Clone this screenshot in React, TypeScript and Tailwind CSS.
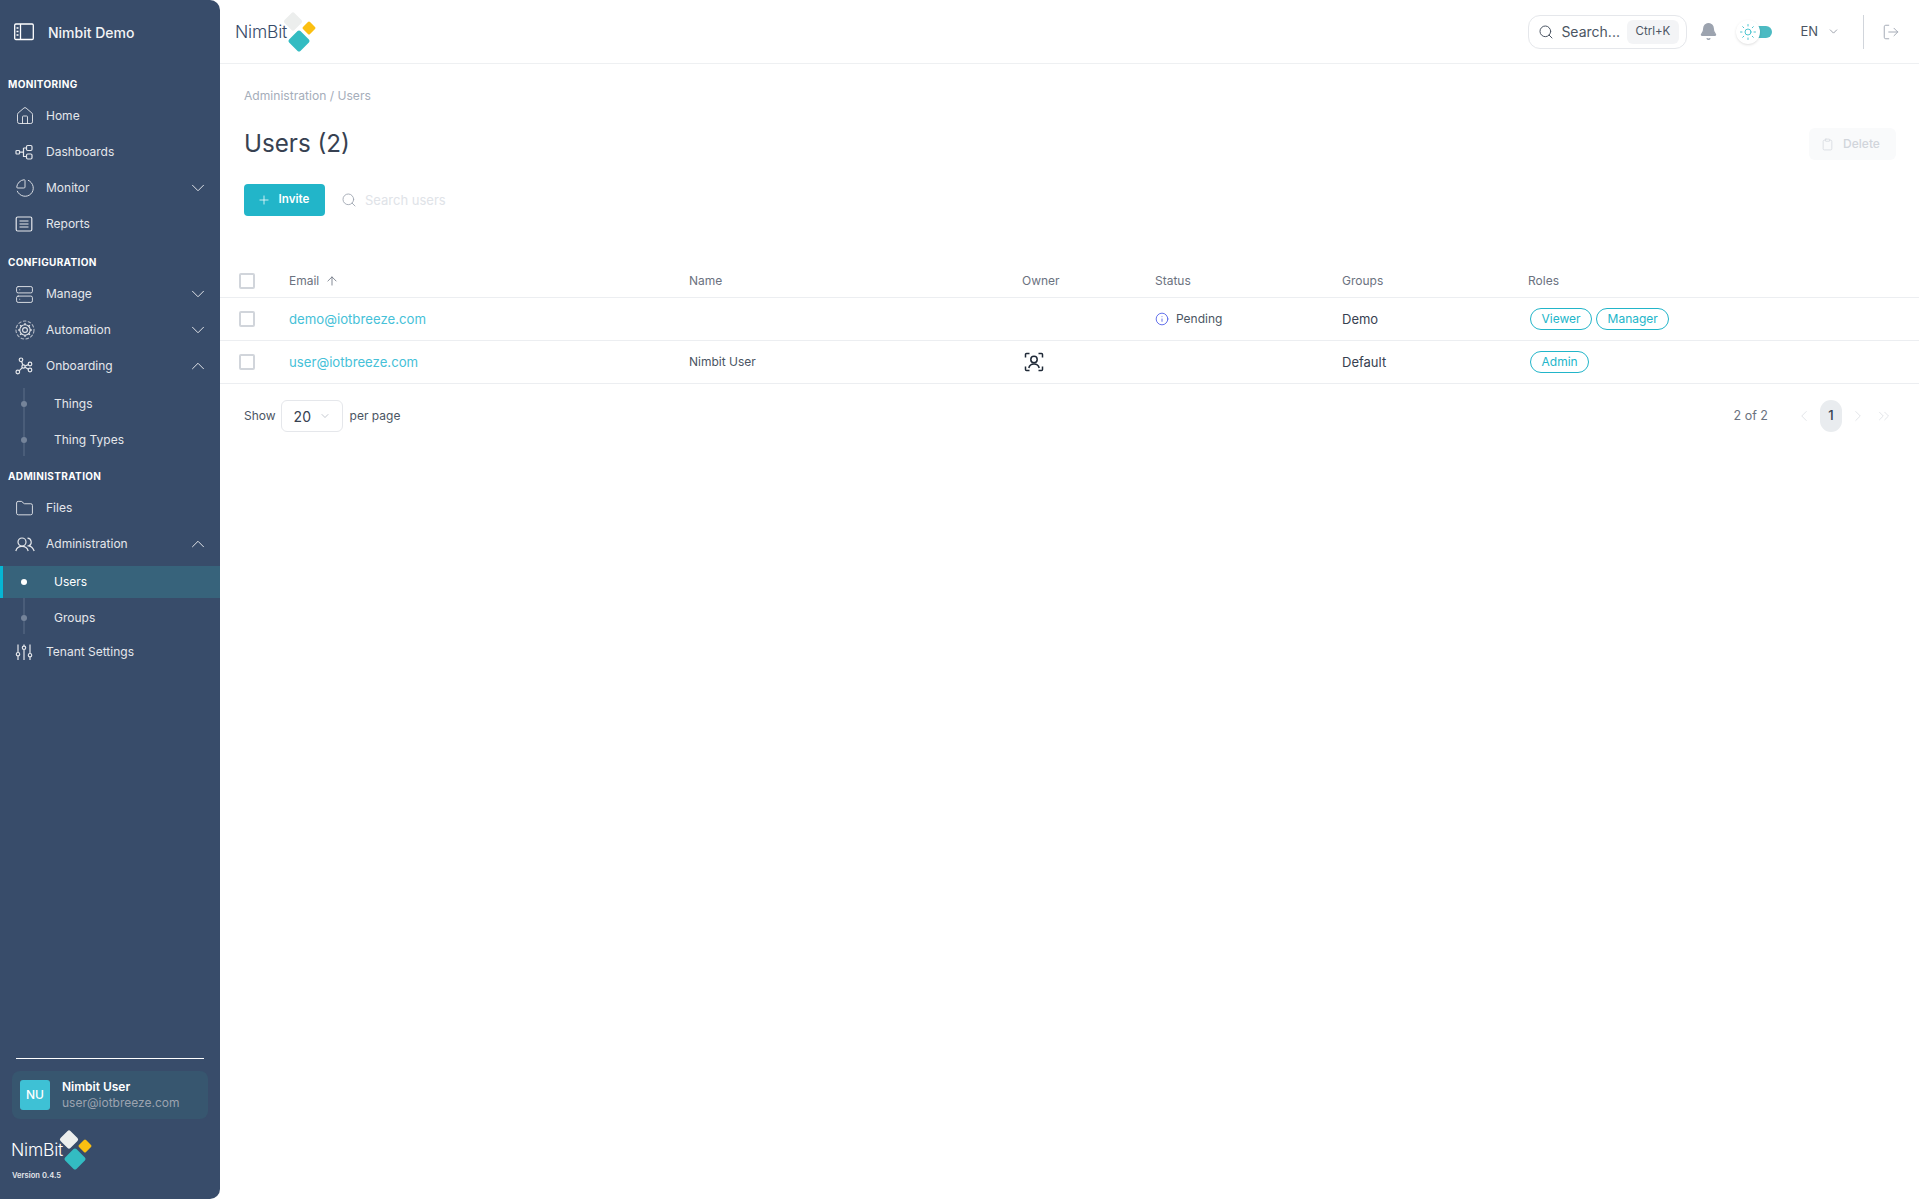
import {
  ArrowUp,
  ChevronDown,
  ChevronLeft,
  ChevronRight,
  ChevronUp,
  ChevronsRight,
  ChartPie,
  Folder,
  House,
  Info,
  Plus,
  Search,
  Server,
  Sun,
  Bell,
  Clipboard,
  LogOut,
} from "lucide-react";
import type { ReactNode } from "react";

function SidebarToggleIcon() {
  return (
    <svg width="20" height="18" viewBox="0 0 20 18" fill="none" stroke="currentColor" strokeWidth="1.3">
      <rect x="0.7" y="1" width="18.6" height="15.5" rx="1.2" />
      <path d="M6.5 1v15.500M2.500 5h2M2.500 8.500h2M2.500 12h2" />
    </svg>
  );
}

function DashboardsIcon() {
  return (
    <svg width="18" height="18" viewBox="0 0 18 18" fill="none" stroke="currentColor" strokeWidth="1.2">
      <rect x="1" y="7.500" width="3.500" height="3.500" rx="0.8" />
      <path d="M4.500 9.200h4M8.500 5v8.500h3M8.500 5h3" />
      <rect x="11.500" y="2.500" width="5.500" height="5" rx="1.200" />
      <rect x="11.500" y="11" width="5.500" height="5" rx="1.200" />
    </svg>
  );
}

function ReportsIcon() {
  return (
    <svg width="18" height="18" viewBox="0 0 18 18" fill="none" stroke="currentColor" strokeWidth="1.2">
      <rect x="1.200" y="2" width="15.600" height="14" rx="1.500" />
      <path d="M4.500 6h9M4.500 9h9M4.500 12h9" />
    </svg>
  );
}

function AutomationIcon() {
  return (
    <svg width="20" height="20" viewBox="0 0 20 20" fill="none" stroke="currentColor" strokeWidth="1.1">
      <circle cx="10" cy="10" r="9" strokeDasharray="3.500 1.500" opacity="0.7" />
      <circle cx="10" cy="10" r="5.200" />
      <circle cx="10" cy="10" r="2.400" />
      <path d="M10 3.200v1.600M10 15.200v1.600M3.200 10h1.600M15.200 10h1.600M5.200 5.200l1.100 1.100M13.700 13.700l1.100 1.100M14.800 5.200l-1.100 1.100M6.300 13.700l-1.100 1.100" strokeWidth="1.600" />
    </svg>
  );
}

function OnboardingIcon() {
  return (
    <svg width="18" height="18" viewBox="0 0 18 18" fill="none" stroke="currentColor" strokeWidth="1.2">
      <circle cx="6" cy="2.800" r="1.800" />
      <circle cx="15" cy="7" r="1.800" />
      <circle cx="15" cy="13" r="1.800" />
      <circle cx="2.800" cy="15" r="1.800" />
      <circle cx="8.500" cy="9.500" r="1.600" />
      <path d="M6.600 4.500l1.300 3.500M10 9l3.400-1.400M10 10.300l3.400 2M7.300 10.700l-3.200 3.200" />
    </svg>
  );
}

function PeopleIcon() {
  return (
    <svg width="20" height="15" viewBox="0 0 20 15" fill="none" stroke="currentColor" strokeWidth="1.2">
      <circle cx="7" cy="5" r="4" />
      <path d="M0.800 14c.8-2.800 3-4.600 6.200-4.600s5.400 1.800 6.200 4.600" />
      <path d="M12.500 1.100a4 4 0 0 1 1.200 7.700c2.600.4 4.500 2.400 5.500 5.200" />
    </svg>
  );
}

function SlidersIcon() {
  return (
    <svg width="18" height="18" viewBox="0 0 18 18" fill="none" stroke="currentColor" strokeWidth="1.2">
      <path d="M3 1.500v8M3 13v4M9 1.500v1.500M9 6.500v10.500M15 1.500v9M15 14v3" />
      <circle cx="3" cy="11.200" r="1.700" />
      <circle cx="9" cy="4.800" r="1.700" />
      <circle cx="15" cy="12.200" r="1.700" />
    </svg>
  );
}

function OwnerIcon() {
  return (
    <svg width="20" height="20" viewBox="0 0 20 20" fill="none" stroke="#1f2937" strokeWidth="1.500">
      <path d="M1.500 5.500V2.500a1 1 0 0 1 1-1h3M14.500 1.500h3a1 1 0 0 1 1 1v3M18.500 14.500v3a1 1 0 0 1-1 1h-3M5.500 18.500h-3a1 1 0 0 1-1-1v-3" />
      <circle cx="10" cy="7.500" r="3.200" />
      <path d="M4.800 16c.6-2.600 2.500-4 5.200-4s4.600 1.400 5.200 4" />
    </svg>
  );
}

function Logo({ light }: { light?: boolean }) {
  return (
    <div className="flex items-center">
      <span
        className={`text-[17.5px] font-light leading-none tracking-[-0.2px] ${light ? "text-white" : "text-[#374b69]"}`}
      >
        NimBit
      </span>
      <svg width="40" height="42" viewBox="0 0 40 42" className="-ml-[5px]">
        <rect x="4" y="3.500" width="14" height="14" rx="2" transform="rotate(45 11 10.500)" fill="#eceeed" />
        <rect x="22" y="12" width="10" height="10" rx="1.500" transform="rotate(45 27 17)" fill="#fbbf11" />
        <rect x="9" y="22" width="16" height="16" rx="2" transform="rotate(45 17 30)" fill="#33bcc2" />
      </svg>
    </div>
  );
}

function SectionLabel({ children, className }: { children: ReactNode; className: string }) {
  return (
    <div className={`pl-2 text-[10px] font-bold leading-4 tracking-[0.35px] text-white uppercase ${className}`}>
      {children}
    </div>
  );
}

function NavRow({ icon, label, open }: { icon: ReactNode; label: string; open?: "up" | "down" }) {
  return (
    <div className="flex h-9 items-center text-[12px] text-[#e5e7eb]">
      <span className="flex w-[46px] shrink-0 items-center pl-[15px] text-[#e5e7eb]">{icon}</span>
      <span>{label}</span>
      {open === "down" && <ChevronDown size={22} strokeWidth={1.05} className="mr-[11px] ml-auto" />}
      {open === "up" && <ChevronUp size={22} strokeWidth={1.05} className="mr-[11px] ml-auto" />}
    </div>
  );
}

function SubRow({ label, active }: { label: string; active?: boolean }) {
  return (
    <div className="relative flex h-9 items-center pl-[54px] text-[12px] text-[#e5e7eb]">
      {active && <div className="absolute inset-x-0 top-[2px] bottom-[2px] border-l-[3px] border-[#06b6d4] bg-[#37637b]" />}
      <span className={`absolute left-[21px] size-[6px] rounded-full ${active ? "bg-white" : "bg-[#75849a]"}`} />
      <span className={`relative ${active ? "text-white" : ""}`}>{label}</span>
    </div>
  );
}

function SubGroup({ children }: { children: ReactNode }) {
  return (
    <div className="relative">
      <div className="absolute top-[2px] bottom-[2px] left-[23px] w-[2px] bg-[#4a5d79]" />
      {children}
    </div>
  );
}

function Sidebar() {
  return (
    <aside className="flex h-full w-[220px] shrink-0 flex-col rounded-r-[10px] bg-[#384c6a]">
      <div className="flex h-16 items-center gap-[14px] pl-[14px] text-white">
        <SidebarToggleIcon />
        <span className="text-[14px] font-medium text-[#f3f4f6]">Nimbit Demo</span>
      </div>
      <SectionLabel className="pt-3 pb-[6px]">Monitoring</SectionLabel>
      <NavRow icon={<House size={20} strokeWidth={1.1} />} label="Home" />
      <NavRow icon={<DashboardsIcon />} label="Dashboards" />
      <NavRow icon={<ChartPie size={20} strokeWidth={1.1} className="-scale-x-100" />} label="Monitor" open="down" />
      <NavRow icon={<ReportsIcon />} label="Reports" />
      <SectionLabel className="pt-3 pb-[6px]">Configuration</SectionLabel>
      <NavRow icon={<Server size={19} strokeWidth={1.15} />} label="Manage" open="down" />
      <NavRow icon={<AutomationIcon />} label="Automation" open="down" />
      <NavRow icon={<OnboardingIcon />} label="Onboarding" open="up" />
      <div className="mt-[2px]">
        <SubGroup>
          <SubRow label="Things" />
          <SubRow label="Thing Types" />
        </SubGroup>
      </div>
      <SectionLabel className="pt-[10px] pb-[6px]">Administration</SectionLabel>
      <NavRow icon={<Folder size={19} strokeWidth={1.15} />} label="Files" />
      <NavRow icon={<PeopleIcon />} label="Administration" open="up" />
      <div className="mt-[2px]">
        <SubGroup>
          <SubRow label="Users" active />
          <SubRow label="Groups" />
        </SubGroup>
      </div>
      <div className="-mt-[2px]">
        <NavRow icon={<SlidersIcon />} label="Tenant Settings" />
      </div>

      <div className="mt-auto px-3 pb-[17px]">
        <div className="mx-1 border-t border-white" />
        <div className="mt-3 flex h-12 items-center gap-[12px] rounded-lg bg-[#37566f] pl-2">
          <div className="flex size-[30px] items-center justify-center rounded-[3px] bg-[#3ec1d5] text-[12px] font-medium text-white">
            NU
          </div>
          <div className="leading-[16px]">
            <div className="text-[12px] font-semibold text-white">Nimbit User</div>
            <div className="text-[12px] text-[#9ca3af]">user@iotbreeze.com</div>
          </div>
        </div>
        <div className="mt-[10px] -mb-[1px] -ml-[1px] h-[42px]">
          <Logo light />
        </div>
        <div className="text-[7.6px] leading-3 font-semibold text-[#e5e7eb]">Version 0.4.5</div>
      </div>
    </aside>
  );
}

function TopBar() {
  return (
    <header className="flex h-16 shrink-0 items-center justify-between border-b border-[#eef0f2] pr-[19px] pl-[15px]">
      <Logo />
      <div className="flex items-center">
        <div className="flex h-[34px] w-[159px] items-center rounded-xl border border-[#e5e7eb] pl-[9px]">
          <Search size={16} strokeWidth={1.5} className="text-[#4b5563]" />
          <span className="ml-[7px] text-[14px] text-[#4b5563]">Search...</span>
          <span className="ml-[7px] flex h-6 w-[52px] items-center justify-center rounded-md bg-[#f3f4f6] text-[11.5px] text-[#4b5563]">
            Ctrl+K
          </span>
        </div>
        <Bell size={19} fill="#9ca3af" strokeWidth={1.5} className="ml-[12px] text-[#9ca3af]" />
        <div className="relative ml-[18px] h-[24px] w-[36px]">
          <div className="absolute top-[6px] right-0 h-3 w-[24px] rounded-full bg-[#4cbac2]" />
          <div className="absolute top-0 left-0 flex size-[24px] items-center justify-center rounded-full bg-white shadow">
            <Sun size={18} strokeWidth={1.2} className="text-[#38bdc9]" />
          </div>
        </div>
        <span className="ml-[28px] pt-px text-[13px] text-[#4b5563]">EN</span>
        <ChevronDown size={13} strokeWidth={1.2} className="ml-[9px] text-[#6b7280]" />
        <div className="ml-[23px] h-[34px] w-px bg-[#d1d5db]" />
        <LogOut size={18} strokeWidth={1.2} className="ml-[18px] text-[#9ca3af]" />
      </div>
    </header>
  );
}

function Checkbox() {
  return <div className="size-[16px] rounded-[2px] border-2 border-[#d1d5db] bg-white" />;
}

function Pill({ children }: { children: ReactNode }) {
  return (
    <span className="flex h-[22px] items-center rounded-full border border-[#22b5c9] px-[10.500px] text-[12px] text-[#22b5c9]">
      {children}
    </span>
  );
}

const rowGrid = "grid grid-cols-[50px_400px_333px_133px_187px_186px_1fr] items-center border-b border-[#eceef1] pl-[19px]";

function UsersTable() {
  return (
    <div className="mt-[47px] text-[#4b5563]">
      <div className={`${rowGrid} h-[35px] pt-[2px] text-[12px] text-[#6b7280]`}>
        <Checkbox />
        <div className="flex items-center gap-[6px]">
          Email <ArrowUp size={14} strokeWidth={1.4} className="text-[#6b7280]" />
        </div>
        <div>Name</div>
        <div>Owner</div>
        <div>Status</div>
        <div>Groups</div>
        <div>Roles</div>
      </div>
      <div className={`${rowGrid} h-[43px] text-[13px]`}>
        <Checkbox />
        <div className="pt-[2px] text-[13.2px] text-[#46c1d8]">demo@iotbreeze.com</div>
        <div />
        <div />
        <div className="flex items-center gap-[7px] text-[12px]">
          <Info size={14} strokeWidth={1.5} className="text-[#4f5fe8]" />
          Pending
        </div>
        <div className="pt-[2px] text-[#374151]">Demo</div>
        <div className="ml-[2px] flex gap-[4px]">
          <Pill>Viewer</Pill>
          <Pill>Manager</Pill>
        </div>
      </div>
      <div className={`${rowGrid} h-[43px] text-[13px]`}>
        <Checkbox />
        <div className="pt-[2px] text-[13.2px] text-[#46c1d8]">user@iotbreeze.com</div>
        <div className="text-[12px]">Nimbit User</div>
        <div className="pl-[2px]">
          <OwnerIcon />
        </div>
        <div />
        <div className="pt-[2px] text-[#374151]">Default</div>
        <div className="ml-[2px] flex">
          <Pill>Admin</Pill>
        </div>
      </div>
    </div>
  );
}

function Pagination() {
  return (
    <div className="flex items-center justify-between pt-4 pr-[26px] pl-[24px]">
      <div className="flex items-center text-[12px] text-[#4b5563]">
        Show
        <div className="mr-[7px] ml-[5px] flex h-8 w-[62px] items-center rounded-md border border-[#e5e7eb] pl-[12px] text-[14px] text-[#374151]">
          20
          <ChevronDown size={12} strokeWidth={1.2} className="ml-[8px] text-[#9ca3af]" />
        </div>
        per page
      </div>
      <div className="flex items-center">
        <span className="mr-[27px] text-[12.5px] text-[#6b7280]">2 of 2</span>
        <ChevronLeft size={18} strokeWidth={1.2} className="text-[#dfe2e7]" />
        <span className="mx-[7px] flex h-8 w-[22px] items-center justify-center rounded-full bg-[#e9ecef] text-[13px] font-medium text-[#374151]">
          1
        </span>
        <ChevronRight size={18} strokeWidth={1.2} className="text-[#dfe2e7]" />
        <ChevronsRight size={18} strokeWidth={1.2} className="ml-[8px] text-[#dfe2e7]" />
      </div>
    </div>
  );
}

export default function App() {
  return (
    <div className="flex h-screen w-full overflow-hidden bg-white font-['Inter',sans-serif]">
      <Sidebar />
      <main className="flex min-w-0 flex-1 flex-col">
        <TopBar />
        <div className="pt-6">
          <div className="pl-[24px] text-[12.1px] leading-4 text-[#a5adba]">Administration / Users</div>
          <div className="mt-6 flex items-center justify-between pr-[23px] pl-[24px]">
            <h1 className="text-[24.2px] leading-8 text-[#374151]">Users (2)</h1>
            <button className="flex h-8 w-[87px] items-center justify-center gap-[9px] rounded-md bg-[#f9fafb] pr-[4px] text-[12px] font-medium text-[#d1d5db]">
              <Clipboard size={13} strokeWidth={1.3} />
              Delete
            </button>
          </div>
          <div className="mt-6 flex items-center pl-[24px]">
            <button className="flex h-8 w-[81px] items-center justify-center gap-[8px] rounded-[4px] bg-[#22b5c9] pr-[3px] text-[11.6px] font-semibold text-white">
              <Plus size={14} strokeWidth={1.3} />
              Invite
            </button>
            <Search size={16} strokeWidth={1.3} className="ml-[16px] text-[#9ca3af]" />
            <span className="ml-[8px] pt-[2px] text-[13px] text-[#e0e3e8]">Search users</span>
          </div>
          <UsersTable />
          <Pagination />
        </div>
      </main>
    </div>
  );
}
